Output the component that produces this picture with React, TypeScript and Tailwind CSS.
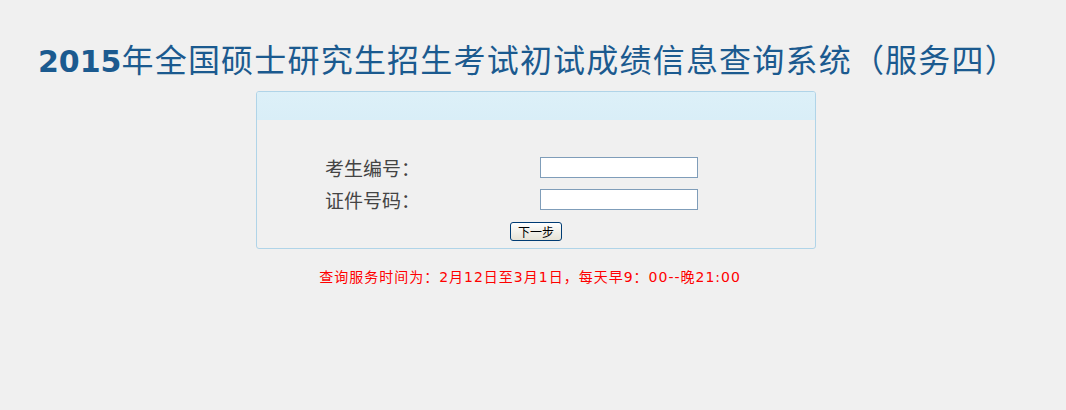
export default function App() {
  return (
    <div className="min-h-[410px] bg-[#f0f0f0] font-['DejaVu_Sans','Noto_Sans_CJK_SC',sans-serif]">
      <h1 className="pl-[38px] pt-[38px] text-[32px] leading-[40px] font-normal text-[#1b5a8f]">
        <span className="font-['DejaVu_Sans'] font-bold text-[30px]">2015</span>
        <span className="font-['Noto_Sans_CJK_SC',sans-serif] tracking-[1.2px]">年全国硕士研究生招生考试初试成绩信息查询系统（服务四）</span>
      </h1>

      <div className="ml-[256px] mt-[9px] w-[560px] h-[158px] border border-[#b0d4e8] rounded-[3px] flex flex-col">
        <div className="h-[28px] bg-gradient-to-b from-[#ddf0f8] to-[#d9eef7] rounded-t-[2px]" />
        <div className="grid grid-cols-[215px_160px] pl-[68px] pt-[37px] gap-y-[11px] items-center font-['Noto_Sans_CJK_SC',sans-serif] text-[19px] leading-[21px] text-[#444]">
          <span>考生编号：</span>
          <input className="h-[21px] w-[158px] border border-[#7f9db9] bg-white" />
          <span>证件号码：</span>
          <input className="h-[21px] w-[158px] border border-[#7f9db9] bg-white" />
        </div>
        <div className="flex justify-center mt-[12px]">
          <button className="h-[19px] w-[52px] rounded-[3px] border border-[#003c74] bg-gradient-to-b from-white to-[#e6e3d6] text-[12px] leading-[15px] text-black font-['Noto_Sans_CJK_SC',sans-serif]">
            下一步
          </button>
        </div>
      </div>

      <p className="ml-[256px] w-[560px] mt-[19px] text-center pr-[12px] text-[14px] leading-[18px] tracking-[1px] text-[#ff0000]">
        查询服务时间为：2月12日至3月1日，每天早9：00--晚21:00
      </p>
    </div>
  )
}
